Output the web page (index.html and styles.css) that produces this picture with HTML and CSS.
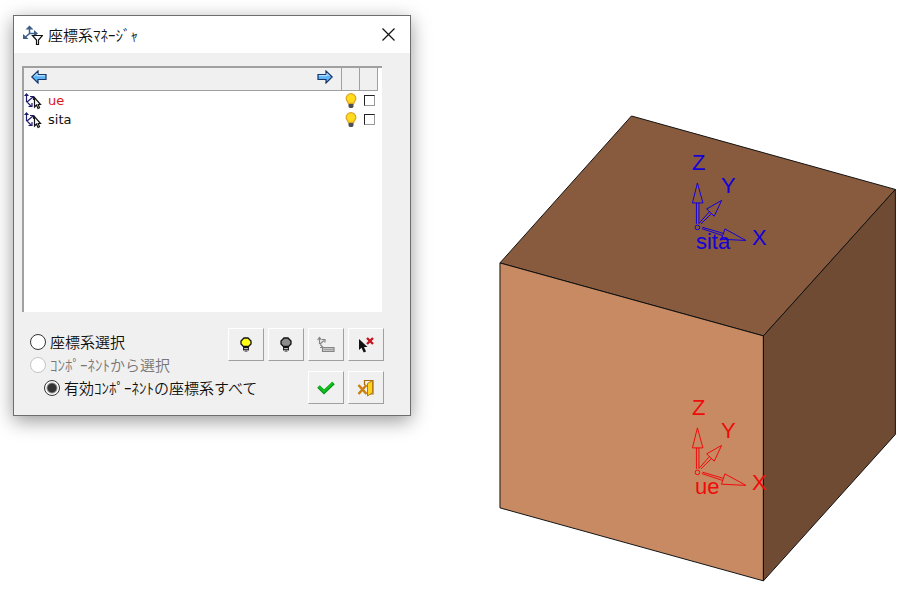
FILE: index.html
```html
<!DOCTYPE html>
<html lang="ja">
<head>
<meta charset="utf-8">
<title>座標系ﾏﾈｰｼﾞｬ</title>
<link rel="stylesheet" href="styles.css">
</head>
<body>
<svg class="defs" aria-hidden="true">
  <symbol id="csys" viewBox="0 0 18 18">
    <path d="M2.500 2V9.500L7 14M3 10L9 5M6 4.500H9.500V8M4.500 14.500H8V11" fill="none" stroke="#1c1c70" stroke-width="1.200"/>
    <path d="M0 4L2.500 1L5 4Z" fill="#1c1c70"/>
    <path d="M10.500 5.500V15L12.500 13L14 16.500L15.500 15.800L14.200 12.500H16.500Z" fill="#fff" stroke="#111" stroke-width="1.200"/>
  </symbol>
  <symbol id="lamp" viewBox="0 0 12 15">
    <path d="M6 .7a4.800 4.800 0 0 1 4.800 4.800C10.800 7.800 9 8.500 8.600 10.500H3.400C3 8.500 1.200 7.800 1.200 5.500A4.800 4.800 0 0 1 6 .7Z" fill="#ffdc1e" stroke="#e0a526" stroke-width="1.300"/>
    <path d="M3.500 11h5v2.500L7.500 15h-3l-1-1.500Z" fill="#4d5055"/>
  </symbol>
  <symbol id="bulb" viewBox="0 0 12 15">
    <path d="M4 1h4l3 3v3L8.500 9.500h-5L1 7V4Z" stroke="#111" stroke-width="1.300"/>
    <path d="M4 10.500h4M3.800 12.300h4.400M4.500 14h3M3.600 9.500v4M8.400 9.500v4" fill="none" stroke="#111" stroke-width="1"/>
  </symbol>
  <symbol id="axes" viewBox="692 182 56 60">
    <circle cx="697.5" cy="227.500" r="2.300"/>
    <path d="M697.500 183L692.500 203H703ZM696.500 203V224M699 203V224"/>
    <path d="M721.700 200.500L706.700 209L714.300 216.300ZM699.500 223L709.500 211.700M701 224L711.500 213.700"/>
    <path d="M746 240.500L725 229L721.500 239.300ZM702.500 227.300L723.500 233.500M702 228.700L722.500 235.500"/>
  </symbol>
</svg>

<main class="workspace">
  <section class="dialog" role="dialog" aria-labelledby="dialog-title">
    <header class="titlebar">
      <svg class="title-icon" viewBox="0 0 20 20" aria-hidden="true">
        <path d="M6.500 8.500V2M6.500 8.500H13M6.500 8.500L2 12.500" fill="none" stroke="#3d5f87" stroke-width="1.500"/>
        <path d="M2.500 4.500L6.500 .5L10.500 4.500ZM11 5L15 8.500L11 11.500ZM0 9V14H5.500Z" fill="#3d5f87"/>
        <path d="M9.500 10.500H19.500L15.500 15V19.500H13.500V15Z" fill="#fff" stroke="#111" stroke-width="1.200"/>
      </svg>
      <h1 class="title" id="dialog-title">座標系ﾏﾈｰｼﾞｬ</h1>
      <button class="close" type="button" aria-label="閉じる">
        <svg class="close-icon" viewBox="0 0 13 13"><path d="M.5 .5L12.500 12.500M12.500 .5L.5 12.500" stroke="#111" stroke-width="1.200"/></svg>
      </button>
    </header>

    <form class="dialog-body">
      <div class="list">
        <table class="systems">
          <thead>
            <tr>
              <th>
                <div class="pager">
                  <button class="arrow" type="button" aria-label="前へ">
                    <svg class="arrow-icon" viewBox="0 0 16 14"><path d="M.8 7L7 1V4.500H15V9.500H7V13Z" fill="#5db4f5" stroke="#17356b" stroke-width="1.200"/><path d="M3 6.500L6 3.500V5.700H14" fill="none" stroke="#c4e8ff"/></svg>
                  </button>
                  <button class="arrow" type="button" aria-label="次へ">
                    <svg class="arrow-icon" viewBox="0 0 16 14"><path d="M15.200 7L9 1V4.500H1V9.500H9V13Z" fill="#5db4f5" stroke="#17356b" stroke-width="1.200"/><path d="M2 5.700H10V3.500L12.500 6" fill="none" stroke="#c4e8ff"/></svg>
                  </button>
                </div>
              </th>
              <th class="narrow"></th>
              <th class="narrow"></th>
            </tr>
          </thead>
          <tbody>
            <tr>
              <td><label class="entry active" for="pick-ue"><svg class="entry-icon"><use href="#csys"/></svg>ue</label></td>
              <td class="mark"><svg class="lamp"><use href="#lamp"/></svg></td>
              <td class="mark"><input class="tick" type="checkbox" id="pick-ue"></td>
            </tr>
            <tr>
              <td><label class="entry" for="pick-sita"><svg class="entry-icon"><use href="#csys"/></svg>sita</label></td>
              <td class="mark"><svg class="lamp"><use href="#lamp"/></svg></td>
              <td class="mark"><input class="tick" type="checkbox" id="pick-sita"></td>
            </tr>
          </tbody>
        </table>
      </div>

      <div class="controls">
        <div class="choices" role="radiogroup" aria-labelledby="dialog-title">
          <label class="choice"><input class="radio" type="radio" name="scope">座標系選択</label>
          <label class="choice"><input class="radio" type="radio" name="scope" disabled>ｺﾝﾎﾟｰﾈﾝﾄから選択</label>
          <label class="choice nested"><input class="radio" type="radio" name="scope" checked>有効ｺﾝﾎﾟｰﾈﾝﾄの座標系すべて</label>
        </div>
        <div class="tools">
          <button class="tool" type="button" aria-label="表示"><svg class="bulb on"><use href="#bulb"/></svg></button>
          <button class="tool" type="button" aria-label="非表示"><svg class="bulb off"><use href="#bulb"/></svg></button>
          <button class="tool" type="button" aria-label="名前変更" disabled>
            <svg class="tool-icon" viewBox="0 0 18 18"><path d="M2.500 8V2M.5 4L2.500 1.500L4.500 4M3 8L7 4.500M5 3.500H8V6.500M3 8L6 11.500M3 11.500H6" fill="none" stroke="#858585" stroke-width="1.200"/><path d="M5.500 11.500H17V15.500H5.500Z" fill="#c4c4c4" stroke="#858585" stroke-width="1.200"/><path d="M7 13.500H16" stroke="#a0a0a0"/></svg>
          </button>
          <button class="tool" type="button" aria-label="選択解除">
            <svg class="tool-icon" viewBox="0 0 18 18"><path d="M2 3V14L4.500 11.800L6.700 16.500L9 15.500L7 11H10.500Z" fill="#111"/><path d="M10 2L16 8M16 2L10 8" stroke="#c4141e" stroke-width="2.400"/></svg>
          </button>
          <button class="tool confirm" type="button" aria-label="OK">
            <svg class="tool-icon" viewBox="0 0 18 18"><path d="M1.500 7.500L7 13L16.500 4" fill="none" stroke="#078a12" stroke-width="3.600"/><path d="M2 7.500L7 12.500L16 4" fill="none" stroke="#0fc41c" stroke-width="2.200"/></svg>
          </button>
          <button class="tool" type="button" aria-label="終了">
            <svg class="tool-icon" viewBox="0 0 18 18"><path d="M7.500 6V1.500H16V15H11" fill="none" stroke="#a86a0c" stroke-width="1.200"/><path d="M10.500 4.500L15.500 1.500V13.500L10.500 17Z" fill="#ffd21c" stroke="#b87a10"/><path d="M1.500 6L9.500 15M9.500 6L1.500 15" stroke="#cc800f" stroke-width="2.600"/></svg>
          </button>
        </div>
      </div>
    </form>
  </section>

  <svg class="scene" viewBox="411 0 512 606" role="img" aria-label="座標系 ue と sita">
    <g class="solid">
      <path class="face-top" d="M631.500 116L895.500 189.500L763.500 336L500 263Z"/>
      <path class="face-front" d="M500 263L763.500 336V581L500 508Z"/>
      <path class="face-side" d="M763.500 336L895.500 189.500V434.500L763.500 581Z"/>
    </g>
    <g class="csys-lower">
      <use href="#axes" x="692" y="182" width="56" height="60"/>
      <text x="692" y="170">Z</text>
      <text x="721" y="193">Y</text>
      <text x="752" y="245">X</text>
      <text x="696" y="249">sita</text>
    </g>
    <g class="csys-upper">
      <use href="#axes" x="692" y="427" width="56" height="60"/>
      <text x="692" y="415">Z</text>
      <text x="721" y="438">Y</text>
      <text x="752" y="490">X</text>
      <text x="695" y="494">ue</text>
    </g>
  </svg>
</main>
</body>
</html>
```
FILE: styles.css
```css
* {
  box-sizing: border-box;
}

body {
  margin: 0;
  background: #fff;
  color: #111;
  font-family: "Noto Sans CJK JP", sans-serif;
  font-size: 15px;
}

button {
  padding: 0;
  border: 0;
  background: none;
}

svg {
  display: block;
}

.defs {
  position: absolute;
  width: 0;
  height: 0;
}

.workspace {
  display: grid;
  grid-template-columns: 7fr 9fr;
  align-items: start;
  padding-left: 13px;
}

/* Dialog window */
.dialog {
  margin-top: 15px;
  border: 1px solid #6e6e6e;
  background: #f0f0f0;
  box-shadow: 0 5px 18px rgba(0, 0, 0, 0.4);
}

.titlebar {
  display: flex;
  align-items: center;
  height: 37px;
  padding: 0 15px 0 9px;
  background: #fff;
}

.title-icon {
  width: 20px;
  height: 20px;
}

.title {
  flex: 1;
  margin: 0 0 0 5px;
  font-size: 15px;
  font-weight: 350;
  line-height: 18px;
}

.close-icon {
  width: 13px;
  height: 13px;
}

.dialog-body {
  padding: 13px 26px 11px 8px;
}

/* List of coordinate systems */
.list {
  min-height: 246px;
  margin-right: 2px;
  padding-right: 4px;
  border-top: 2px solid #a0a0a0;
  border-left: 2px solid #a0a0a0;
  background: #fff;
}

.systems {
  width: 100%;
  border-collapse: separate;
  border-spacing: 0;
  table-layout: fixed;
  font-family: "DejaVu Sans", sans-serif;
  font-size: 13px;
}

.systems th {
  height: 23px;
  padding: 0;
  border-right: 1px solid #a0a0a0;
  border-bottom: 1px solid #a0a0a0;
  background: #f0f0f0;
}

.systems .narrow {
  width: 18px;
}

.systems td {
  height: 19px;
  padding: 0;
}

.pager {
  display: flex;
  justify-content: space-between;
  padding: 0 8px 4px 7px;
}

.arrow-icon {
  width: 16px;
  height: 14px;
}

.entry {
  display: flex;
  align-items: center;
  gap: 6px;
  line-height: 19px;
}

.entry.active {
  color: #d8141e;
}

.entry-icon {
  width: 18px;
  height: 18px;
}

.lamp {
  width: 12px;
  height: 15px;
  margin: 0 auto;
}

.tick {
  display: block;
  appearance: none;
  width: 11px;
  height: 11px;
  margin: 0 auto;
  border: 1px solid #222;
  border-right-color: #999;
  border-bottom-color: #999;
  background: #fff;
}

.tick:checked {
  background: #333;
}

/* Scope choices and tool buttons */
.controls {
  display: grid;
  grid-template-columns: minmax(0, 1fr) auto;
  margin-top: 16px;
}

.choices {
  padding: 2px 0 0 8px;
}

.choice {
  display: flex;
  align-items: center;
  gap: 4px;
  height: 23px;
  white-space: nowrap;
  font-weight: 350;
}

.choice:has(:disabled) {
  color: #777;
}

.nested {
  margin-left: 14px;
}

.radio {
  appearance: none;
  flex: none;
  width: 16px;
  height: 16px;
  margin: 0;
  border: 1px solid #333;
  border-radius: 50%;
  background: #fff;
}

.radio:checked {
  background: radial-gradient(circle, #333 4px, #fff 6px);
}

.radio:disabled {
  border-color: #c4c4c4;
}

.tools {
  display: grid;
  grid-template-columns: repeat(4, 36px);
  grid-auto-rows: 33px;
  gap: 10px 4px;
}

.tool {
  display: grid;
  place-items: center;
  border: 1px solid #fff;
  border-right-color: #a0a0a0;
  border-bottom-color: #a0a0a0;
  background: #f0f0f0;
}

.confirm {
  grid-column: 3;
}

.tool-icon {
  width: 18px;
  height: 18px;
}

.bulb {
  width: 12px;
  height: 15px;
}

.bulb.on {
  fill: #ffff14;
}

.bulb.off {
  fill: #8c8c8c;
}

/* Model view */
.scene {
  width: 100%;
  height: auto;
  font-family: "Liberation Sans", sans-serif;
  font-size: 22px;
}

.solid {
  stroke: #111;
  stroke-width: 1px;
  stroke-linejoin: round;
}

.face-top {
  fill: #885b3f;
}

.face-front {
  fill: #c78a63;
}

.face-side {
  fill: #6f4b33;
}

.csys-lower use,
.csys-upper use {
  fill: none;
  stroke-width: 1px;
}

.csys-lower {
  fill: #1400d8;
  stroke: #1400d8;
}

.csys-upper {
  fill: #f00a0a;
  stroke: #f00a0a;
}

.scene text {
  stroke: none;
}
```
